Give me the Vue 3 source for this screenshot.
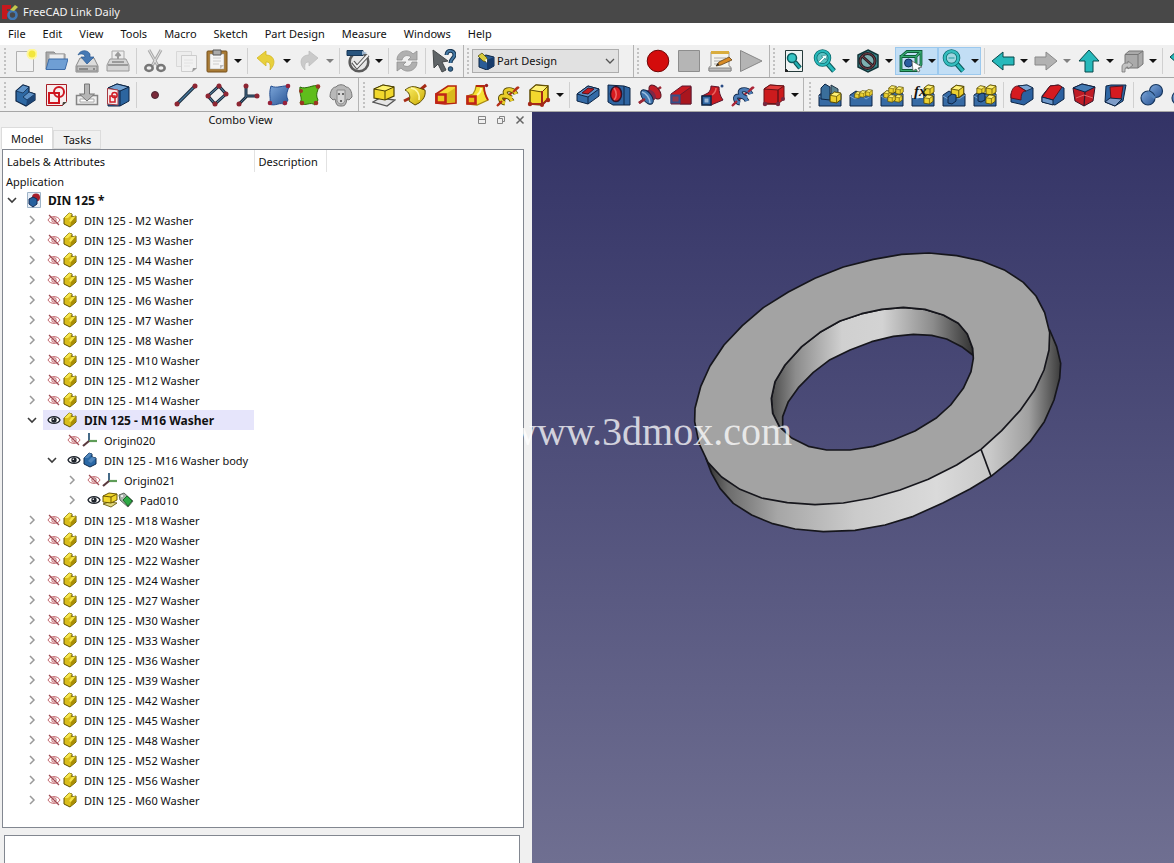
<script setup>
import { ref } from 'vue'

const menus = ['File', 'Edit', 'View', 'Tools', 'Macro', 'Sketch', 'Part Design', 'Measure', 'Windows', 'Help']

const b = (icon, label, opts = {}) => ({ kind: 'button', icon, label, ...opts })
const sep = { kind: 'separator' }
const menu = { menu: true }

const topRow = [
  {
    name: 'File',
    items: [
      b('new', 'New'), b('open', 'Open'), b('save', 'Save'), b('print', 'Print'), sep,
      b('cut', 'Cut'), b('copy', 'Copy'), b('paste', 'Paste', menu), sep,
      b('undo', 'Undo', menu), b('redo', 'Redo', { menu: true, off: true }), sep,
      b('check', 'Validate', menu), sep, b('refresh', 'Refresh'), sep, b('help', "What's This?"),
    ],
  },
  { name: 'Workbench', items: [{ kind: 'select' }] },
  { name: 'Macro', items: [b('record', 'Record macro'), b('stop', 'Stop macro'), b('macros', 'Macros'), b('play', 'Execute macro')] },
  {
    name: 'View',
    items: [
      b('fit', 'Fit all'), b('fitsel', 'Fit selection', menu), b('style', 'Draw style', menu),
      b('boxsel', 'Box selection', { menu: true, on: true }), b('zoom', 'Zoom', { menu: true, on: true }), sep,
      b('left', 'Back', menu), b('right', 'Forward', { menu: true, off: true }), b('up', 'Up', menu),
      b('link', 'Link', menu), sep, b('sync', 'Sync view'),
    ],
  },
]

const bottomRow = [
  {
    name: 'Part Design Helper',
    items: [
      b('body', 'Create body'), b('sketch', 'Create sketch'), b('import', 'Attach sketch'), b('map', 'Map sketch'), sep,
      b('point', 'Datum point'), b('line', 'Datum line'), b('plane', 'Datum plane'), b('axes', 'Coordinate system'),
      b('shapeblue', 'Shape binder'), b('shapegreen', 'Sub-shape binder'), b('clone', 'Clone'),
    ],
  },
  {
    name: 'Part Design Modeling',
    items: [
      b('pad', 'Pad'), b('revolve', 'Revolution'), b('loft', 'Additive loft'), b('pipe', 'Additive pipe'),
      b('helix', 'Additive helix'), b('prim', 'Additive primitive', menu), sep,
      b('pocket', 'Pocket'), b('hole', 'Hole'), b('groove', 'Groove'), b('subloft', 'Subtractive loft'),
      b('subpipe', 'Subtractive pipe'), b('subhelix', 'Subtractive helix'), b('subprim', 'Subtractive primitive', menu),
    ],
  },
  {
    name: 'Part Design Patterns',
    wide: true,
    items: [
      b('mirror', 'Mirrored'), b('linear', 'Linear pattern'), b('polar', 'Polar pattern'), b('fx', 'Configuration'),
      b('scaled', 'Scaled'), b('multi', 'MultiTransform'), sep,
      b('fillet', 'Fillet'), b('chamfer', 'Chamfer'), b('draft', 'Draft'), b('thick', 'Thickness'), sep,
      b('bool', 'Boolean'), b('bool', 'Boolean fragments'),
    ],
  },
]

const washer = (size) => ({ level: 1, label: `DIN 125 - M${size} Washer`, icons: ['t-part'], eye: 'off', open: false })

const rows = [
  { level: 0, label: 'DIN 125 *', icons: ['t-doc'], open: true, bold: true },
  ...[2, 3, 4, 5, 6, 7, 8, 10, 12, 14].map(washer),
  { level: 1, label: 'DIN 125 - M16 Washer', icons: ['t-part'], eye: 'on', open: true, bold: true, selected: true },
  { level: 2, label: 'Origin020', icons: ['t-origin'], eye: 'off' },
  { level: 2, label: 'DIN 125 - M16 Washer body', icons: ['t-body'], eye: 'on', open: true },
  { level: 3, label: 'Origin021', icons: ['t-origin'], eye: 'off', open: false },
  { level: 3, label: 'Pad010', icons: ['t-pad', 't-tag'], eye: 'on', open: false },
  ...[18, 20, 22, 24, 27, 30, 33, 36, 39, 42, 45, 48, 52, 56, 60].map(washer),
]

const workbench = ref('Part Design')
const tab = ref('Model')
</script>

<template>
  <div class="window">
    <svg class="sprite" aria-hidden="true">
      <defs>
        <linearGradient id="gYel" x2="1" y2="1"><stop stop-color="#fff36b" /><stop offset="1" stop-color="#c9a800" /></linearGradient>
        <linearGradient id="gBlue" x2="1" y2="1"><stop stop-color="#7da7da" /><stop offset="1" stop-color="#2a5595" /></linearGradient>

        <symbol id="new" viewBox="0 0 24 24"><path d="M3.500 2.500h17v20h-17z" fill="#f2f2f2" stroke="#b0b0b0" /><circle cx="19" cy="5" r="5.500" fill="#fff799" /><circle cx="19" cy="5" r="3.500" fill="#f2e63c" /></symbol>
        <symbol id="open" viewBox="0 0 24 24"><path d="M2 20V3h8l2 2h9v15z" fill="#a9a9a9" stroke="#8a8a8a" /><path d="M5 5h15v9H5z" fill="#eee" stroke="#aaa" /><path d="M2 20.500 5 10h19l-3 10.500z" fill="#6f9fd4" stroke="#3d6ca8" /></symbol>
        <symbol id="save" viewBox="0 0 24 24"><path d="M5 9h14l4 8v6H1v-6z" fill="#dcdcdc" stroke="#888" /><path d="M2 17h20v5H2z" fill="#c1c1c1" stroke="#888" /><path d="M4 20h9M18 20h2" stroke="#777" stroke-width="1.500" /><path d="M3 6c2-5 9-6 12-1v3h4l-7 7-6-7h4c0-3-4-4-7-2z" fill="#4679b4" stroke="#2b5a92" stroke-width=".7" /></symbol>
        <symbol id="print" viewBox="0 0 24 24"><path d="M6 2h12v10H6z" fill="#ededed" stroke="#aaa" /><path d="M12 5v5M9.500 7 12 4l2.500 3" fill="none" stroke="#999" stroke-width="2" /><path d="M4 10h16l3 6v6H1v-6z" fill="#d5d5d5" stroke="#989898" /><path d="M2 16h20M6 13h12" stroke="#888" stroke-width="1.500" /></symbol>
        <symbol id="cut" viewBox="0 0 24 24"><path d="m6 1 9 16M18 1 9 17" stroke="#aaa" stroke-width="3" /><path d="m6 1 9 16M18 1 9 17" stroke="#e2e2e2" /><g fill="none" stroke="#777" stroke-width="2.500"><ellipse cx="6" cy="19" rx="3.700" ry="3" /><ellipse cx="18" cy="19" rx="3.700" ry="3" /></g></symbol>
        <symbol id="copy" viewBox="0 0 24 24"><path d="M2.500 2.500h15v15h-15z" fill="#ededed" stroke="#d8d8d8" /><path d="M7.500 6.500h15v13l-4 3h-11z" fill="#f1f1f1" stroke="#cdcdcd" /><path d="M10 11h9M10 14h9M10 17h6" stroke="#e2e2e2" /><path d="m18 23 1-4h4z" fill="#999" /></symbol>
        <symbol id="paste" viewBox="0 0 24 24"><rect x="2" y="2" width="20" height="21" rx="1" fill="#a97b35" stroke="#76511c" /><path d="M5 5h14v15H5z" fill="#f5f5f5" stroke="#999" stroke-width=".5" /><path d="M8 1h8v5H8z" fill="#aaa" stroke="#555" /><path d="M8 9h8M8 12h8M8 15h6" stroke="#ccc" /><path d="M15 20v-4h4z" fill="#bbb" /></symbol>
        <symbol id="undo" viewBox="0 0 24 24"><path d="m3 9 9-7v4c8 0 11 8 4 15 1-7-1-8-4-8v4z" fill="#e8d03c" stroke="#d3b622" stroke-width=".8" /></symbol>
        <symbol id="redo" viewBox="0 0 24 24"><path d="m21 9-9-7v4c-8 0-11 8-4 15-1-7 1-8 4-8v4z" fill="#cacaca" stroke="#bcbcbc" stroke-width=".8" /></symbol>
        <symbol id="check" viewBox="0 0 24 24"><circle cx="13" cy="13" r="9.300" fill="#e7e7e7" stroke="#5b5b5b" stroke-width="2.600" /><path d="M1 1.500h16v5H1z" fill="#28547e" stroke="#173656" /><path d="m16 2 5 2-5 2" fill="#9fb8d0" /><path d="m7 13 4 5L22 6" fill="none" stroke="#555" stroke-width="4" /><path d="m7 13 4 5L22 6" fill="none" stroke="#f2f2f2" stroke-width="2" /></symbol>
        <symbol id="refresh" viewBox="0 0 24 24"><path d="M2 11c0-9 11-12 16-6l4-3v9h-9l3-3c-4-3-8-1-9 3zM22 13c0 9-11 12-16 6l-4 3v-9h9l-3 3c4 3 8 1 9-3z" fill="#b0b0b0" stroke="#919191" stroke-width=".8" /></symbol>
        <symbol id="help" viewBox="0 0 24 24"><path d="m1 1 15 11-6 1 4 8-4 2-4-8-4 4z" fill="#5f6467" stroke="#44484a" /><path d="M14.500 6c0-6 8-5 8 0 0 3-4 3.500-4 8" fill="none" stroke="#173550" stroke-width="4" /><path d="M14.500 6c0-6 8-5 8 0 0 3-4 3.500-4 8" fill="none" stroke="#4579a5" stroke-width="2" /><circle cx="18.500" cy="20" r="2.300" fill="#3a6a92" stroke="#173550" /></symbol>
        <symbol id="record" viewBox="0 0 24 24"><circle cx="12" cy="12" r="10.800" fill="#d40c0c" stroke="#6f0808" /></symbol>
        <symbol id="stop" viewBox="0 0 24 24"><path d="M1.500 1.500h21v21h-21z" fill="#b5b5b5" stroke="#8d8d8d" /></symbol>
        <symbol id="macros" viewBox="0 0 24 24"><path d="M3 3h18v14l2 1v4H1v-4l2-1z" fill="#f3f3ee" stroke="#999" /><path d="M1 19h22v3H1z" fill="#bbb" stroke="#888" /><path d="M3 2h18v3H3z" fill="#d9ad3e" /><path d="M6 9h12M6 12h10M6 15h7" stroke="#aaa" /><path d="m8 17 3-4 10-5 3 3-11 5z" fill="#d88b25" stroke="#61431b" stroke-width=".8" /><path d="m8 17 2-3 1 2z" fill="#222" /></symbol>
        <symbol id="play" viewBox="0 0 24 24"><path d="M1.500 1.500v21L23 12z" fill="#b4b4b4" stroke="#888" /></symbol>
        <symbol id="fit" viewBox="0 0 24 24"><path d="M3.500 1.500h17v21h-14l-3-3z" fill="#eff2f2" stroke="#263a3a" /><path d="m13 13 5 6" stroke="#0b4e50" stroke-width="4.500" /><path d="m13 13 5 6" stroke="#1fadb0" stroke-width="2.500" /><circle cx="10" cy="9" r="4.500" fill="#35c4c4" stroke="#0b5d60" stroke-width="1.500" /><path d="m3 19 4 4H3z" fill="#222" /></symbol>
        <symbol id="fitsel" viewBox="0 0 24 24"><path d="m14 14 7 8" stroke="#08585a" stroke-width="5" /><path d="m14 14 7 8" stroke="#27b9bb" stroke-width="3" /><circle cx="9.500" cy="9" r="7" fill="#5cc2c3" stroke="#08696b" stroke-width="3.500" /><circle cx="9.500" cy="9" r="7" fill="none" stroke="#27b9bb" stroke-width="2" /><path d="m5 13 5-5-2-1 6-1-1 5-1-2-5 5z" fill="#f3ffff" stroke="#147476" stroke-width=".5" /></symbol>
        <symbol id="style" viewBox="0 0 24 24"><path d="m12 1 10 5v12l-10 5L2 18V6z" fill="#39868b" stroke="#123539" stroke-width="1.500" /><circle cx="11.500" cy="12" r="7.500" fill="#7db0b1" stroke="#241f26" stroke-width="3" /><path d="m6 7 11 10" stroke="#241f26" stroke-width="3" /><circle cx="11.500" cy="12" r="7.500" fill="none" stroke="#7a4046" stroke-width="1" /><path d="m6 7 11 10" stroke="#7a4046" /></symbol>
        <symbol id="boxsel" viewBox="0 0 24 24"><circle cx="9.500" cy="14" r="4" fill="#2a5da0" stroke="#102d58" /><g fill="none" stroke="#0f5a38" stroke-width="2.800"><path d="M2 7.500h15v14H2zM2 7.500l6-5h14v13l-5 6M17 7.500l5-5" /></g><path d="M2 7.500h15v14H2zM2 7.500l6-5h14v13l-5 6M17 7.500l5-5" fill="none" stroke="#36ac70" stroke-width="1.200" /><path d="m13 12 10 6-4 1 2 3-2 1-2-3-3 2z" fill="#fff" stroke="#555" stroke-width=".7" /></symbol>
        <symbol id="zoom" viewBox="0 0 24 24"><path d="m14 14 7 8" stroke="#08585a" stroke-width="5" /><path d="m14 14 7 8" stroke="#27b9bb" stroke-width="3" /><circle cx="9.500" cy="9" r="6.800" fill="#9fd6e0" stroke="#08696b" stroke-width="4" /><circle cx="9.500" cy="9" r="6.800" fill="none" stroke="#35bdbf" stroke-width="2.500" /><path d="M6.500 9h6" stroke="#5fb7bf" stroke-width="2" /></symbol>
        <symbol id="left" viewBox="0 0 24 24"><path d="m1 12 11-9v5h11v8H12v5z" fill="#27b9bb" stroke="#07494b" /></symbol>
        <symbol id="right" viewBox="0 0 24 24"><path d="M23 12 12 3v5H1v8h11v5z" fill="#b2b2b2" stroke="#898989" /></symbol>
        <symbol id="up" viewBox="0 0 24 24"><path d="m12 1 10 11h-6v11H8V12H2z" fill="#27b9bb" stroke="#07494b" /></symbol>
        <symbol id="link" viewBox="0 0 24 24"><path d="M5 5.500 9 2h14v13l-5 4H5z" fill="#aaa" stroke="#777" /><path d="M5 5.500h13L23 2M18 5.500V19" fill="none" stroke="#777" /><path d="M2 23v-5c0-3 2-4 6-4v-2l5 4-5 4v-2c-2 0-3 1-3 3v2z" fill="#c2c2c2" stroke="#777" stroke-width=".8" /></symbol>
        <symbol id="sync" viewBox="0 0 24 24"><path d="m1 8 7-6v4h12v12h-4v-8H8v4z" fill="#27b9bb" stroke="#07494b" /></symbol>

        <symbol id="body" viewBox="0 0 24 24"><path d="m3 8 7-6 6 2v5l6 2v6l-9 6-10-5z" fill="#2e69a4" stroke="#0c2444" stroke-width="1.200" /><path d="m3 8 7-6 6 2-6 6zM10 14l6-5 6 2-8 6z" fill="#5f93c8" stroke="#0c2444" stroke-width=".7" /><path d="m14 17 8-6v6l-9 6z" fill="#1d4677" /></symbol>
        <symbol id="sketch" viewBox="0 0 24 24"><path d="M2.500 1.500h20v17l-4 4h-16z" fill="#f6eeee" stroke="#a71d25" /><path d="M5 10h10v10H5z" fill="none" stroke="#cf1620" stroke-width="2" /><circle cx="15" cy="9" r="5" fill="none" stroke="#cf1620" stroke-width="2" /><path d="m18 23 1-4h4z" fill="#4b463c" /></symbol>
        <symbol id="import" viewBox="0 0 24 24"><path d="M1.500 12.500h21v9h-21z" fill="#eee" stroke="#858585" stroke-width="1.500" /><path d="M5 16h14v3H5z" fill="#fff" stroke="#aaa" /><path d="M9.500 1h5v10h5L12 18l-7.500-7h5z" fill="#b5b5b5" stroke="#777" /></symbol>
        <symbol id="map" viewBox="0 0 24 24"><path d="m2 5 9-4 12 3v14l-9 5H2z" fill="#2c659f" stroke="#0c2444" /><path d="m2 5 9-4 12 3-9 4z" fill="#75a3d2" stroke="#0c2444" /><path d="M14 8v15" stroke="#0c2444" /><path d="M1.500 5.500 12 7v15l-10.500-1z" fill="#f4eeee" stroke="#a73b43" /><path d="M4 13h5v6H4z" fill="none" stroke="#d01d26" stroke-width="1.500" /><circle cx="8.500" cy="12" r="2.600" fill="none" stroke="#d01d26" stroke-width="1.500" /></symbol>
        <symbol id="point" viewBox="0 0 24 24"><circle cx="12" cy="12" r="3.500" fill="#7a2a39" stroke="#4a2834" /></symbol>
        <symbol id="line" viewBox="0 0 24 24"><path d="M3 21 21 3" stroke="#182a3c" stroke-width="3.200" /><path d="M3 21 21 3" stroke="#477a9e" stroke-width="1.300" /><circle cx="3" cy="21" r="2.500" fill="#8e2633" /><circle cx="21" cy="3" r="2.500" fill="#8e2633" /></symbol>
        <symbol id="plane" viewBox="0 0 24 24"><path d="M14 3 21 11 10 21 3 13z" fill="none" stroke="#182a3c" stroke-width="3" /><path d="M14 3 21 11 10 21 3 13z" fill="none" stroke="#6c9abb" /><g fill="#8e2633"><circle cx="14" cy="3" r="2.500" /><circle cx="21" cy="11" r="2.500" /><circle cx="10" cy="21" r="2.500" /><circle cx="3" cy="13" r="2.500" /></g></symbol>
        <symbol id="axes" viewBox="0 0 24 24"><path d="M10 3v11l-7 7M10 13h11" fill="none" stroke="#182a3c" stroke-width="3" /><path d="M10 3v11l-7 7M10 13h11" fill="none" stroke="#476c8a" /><g fill="#8e2633"><circle cx="10" cy="3" r="2.500" /><circle cx="3" cy="21" r="2.500" /><circle cx="21" cy="13" r="2.500" /></g></symbol>
        <symbol id="shapeblue" viewBox="0 0 24 24"><path d="M4 3c6 3 12-1 18 0-1 5-4 8-1 14l-3 5c-5-4-9 2-16-1 3-5-1-8 2-18z" fill="url(#gBlue)" stroke="#254f91" /><g fill="#97223b"><circle cx="21" cy="3" r="2.300" /><circle cx="3" cy="20" r="2.300" /><circle cx="18" cy="20" r="2.300" /></g></symbol>
        <symbol id="shapegreen" viewBox="0 0 24 24"><path d="M2 4c6 3 13-3 19-1-1 5-4 8-1 14l-3 5c-5-4-9 2-15-2 3-5-1-8 0-16z" fill="#5fbd1c" stroke="#2c6808" /><g fill="#9c3524"><circle cx="20" cy="3.500" r="2.300" /><circle cx="3" cy="8" r="2" /><circle cx="4" cy="20" r="2.300" /><circle cx="18" cy="20" r="2.300" /></g></symbol>
        <symbol id="clone" viewBox="0 0 24 24"><path d="M7 4c2-3 8-3 10 0 4 0 6 5 6 10l-3 3-2-1-1 4c-1 3-3 3-5 3s-4 0-5-3l-1-4-2 1-3-3C1 9 3 4 7 4z" fill="#b8b8b8" stroke="#777" /><path d="M8 7h8v11c-2 4-6 4-8 0z" fill="#d6d6d6" stroke="#8c8c8c" /><path d="M9 11h2M13 11h2M11 18h2" stroke="#444" stroke-width="1.500" /></symbol>

        <symbol id="pad" viewBox="0 0 24 24"><path d="m1 19 7-4 15 2-8 6z" fill="#e5e5e5" stroke="#555" stroke-width="1.300" /><path d="m2 6 9-4 11 2v9l-9 4-11-2z" fill="#f1d82d" stroke="#4c4000" stroke-width="1.200" /><path d="m2 6 9-4 11 2-9 4z" fill="#fff36d" stroke="#4c4000" /><path d="M13 8v9" stroke="#4c4000" /></symbol>
        <symbol id="revolve" viewBox="0 0 24 24"><path d="m1 18 6-3M17 7l6-5" stroke="#a62b16" stroke-width="3" /><path d="M2 7c4-3 7-4 11-3l9 3c1 6-2 10-6 13l-4 2-6-4c2-5 0-9-4-11z" fill="url(#gYel)" stroke="#5b4a00" /><path d="M8 5c6 1 9 6 8 12" fill="none" stroke="#fff9a5" stroke-width="1.500" /></symbol>
        <symbol id="loft" viewBox="0 0 24 24"><path d="m2 11 12-8h8v17l-11 1-9-1z" fill="#f6dc32" stroke="#b5250f" stroke-width="1.600" /><path d="m12 11 9-6v14l-9 1z" fill="#d9b91c" /><path d="M2.500 11.500h9v8h-9z" fill="#ecc822" stroke="#c02318" stroke-width="2.600" /></symbol>
        <symbol id="pipe" viewBox="0 0 24 24"><path d="m2 13 6-2c2-3 3-5 3-8l8 1c0 5 1 9 4 13l-11 5-10-1z" fill="#f6e034" stroke="#a98a12" stroke-width="1.300" /><path d="M11 3h8c0 5 1 9 4 14" fill="none" stroke="#b5250f" stroke-width="1.800" /><path d="M12 12c3-2 4-4 4-7" fill="none" stroke="#fff9a5" stroke-width="2" /><path d="M2.500 13.500h8v7h-8z" fill="#eabc1c" stroke="#c02318" stroke-width="2.600" /><circle cx="21.500" cy="2.500" r="1.700" fill="#922" /></symbol>
        <symbol id="helix" viewBox="0 0 24 24"><path d="M2 22 22 4" stroke="#b5301b" stroke-width="2.200" /><g fill="none" stroke="#5a4b00" stroke-width="5"><path d="M9 20c-5-1-6-7-2-7s8 2 9 5M16 15c-6-1-9-7-5-8s8 1 9 4" /></g><g fill="none" stroke="#e9cd29" stroke-width="3.200"><path d="M9 20c-5-1-6-7-2-7s8 2 9 5M16 15c-6-1-9-7-5-8s8 1 9 4" /></g><path d="m17 9 6-5M1 23l5-5" stroke="#b5301b" stroke-width="2.200" /></symbol>
        <symbol id="prim" viewBox="0 0 24 24"><path d="m3 7 6-5 12 1v13l-6 6-12-1z" fill="#f2d72e" stroke="#5f4b00" stroke-width="1.500" /><path d="m3 7 6-5 12 1-6 6z" fill="#fff178" stroke="#5f4b00" /><path d="M3 21h12V8M15 22l6-6" fill="none" stroke="#a42819" stroke-width="2" /><g fill="#a42819"><circle cx="3" cy="21" r="2.200" /><circle cx="15" cy="22" r="2" /><circle cx="21" cy="17" r="2.200" /></g></symbol>
        <symbol id="pocket" viewBox="0 0 24 24"><path d="m1 11 11-8 11 3v7L12 21 1 18z" fill="#346ba7" stroke="#0c2444" /><path d="m1 11 11-8 11 3-11 8z" fill="#5f92c8" stroke="#0c2444" /><path d="m6 10 6-5 6 1-6 5z" fill="#c11b20" stroke="#51111d" /><path d="M12 14v7" stroke="#0c2444" /></symbol>
        <symbol id="hole" viewBox="0 0 24 24"><path d="m1 2 16 1 6 2v17H6l-5-3z" fill="#2e64a1" stroke="#0c2444" /><path d="M17 3v19" stroke="#0c2444" /><ellipse cx="9" cy="11" rx="5.500" ry="7.500" fill="#d81b1f" stroke="#361226" stroke-width="1.500" /><path d="M7 5c3 4 3 9 0 12" fill="none" stroke="#ee6b68" stroke-width="1.500" /></symbol>
        <symbol id="groove" viewBox="0 0 24 24"><path d="M1 20 23 4" stroke="#9c2835" stroke-width="2.500" /><ellipse cx="17" cy="9" rx="4.500" ry="8" transform="rotate(-38 17 9)" fill="#c21d27" stroke="#581524" /><ellipse cx="13" cy="12" rx="4" ry="6" transform="rotate(-38 13 12)" fill="#7e2848" /><ellipse cx="9" cy="14" rx="4.500" ry="8.500" transform="rotate(-38 9 14)" fill="#3f74ae" stroke="#0c2444" /><path d="M4 9c4 1 8 6 8 11" fill="none" stroke="#9bbde0" stroke-width="1.500" /><path d="m1 20 6-4" stroke="#9c2835" stroke-width="2.500" /></symbol>
        <symbol id="subloft" viewBox="0 0 24 24"><path d="m2 11 11-8h9v18H2z" fill="#c71a21" stroke="#5d172e" /><path d="m11 12 11-8v17H11z" fill="#a9161e" stroke="#5d172e" stroke-width=".8" /><path d="M2.500 12.500h8v7h-8z" fill="#8f3a4e" stroke="#344f89" stroke-width="2" /></symbol>
        <symbol id="subpipe" viewBox="0 0 24 24"><path d="m2 13 6-3c2-2 3-4 3-7l8 1c0 5 1 9 4 13l-12 5-9-1z" fill="#c71a21" stroke="#5d172e" /><path d="M12 12c3-2 4-4 4-7" fill="none" stroke="#e96560" stroke-width="1.500" /><path d="M2 13h9v9H2z" fill="#2e64a1" stroke="#0c2444" stroke-width="1.500" /><path d="M4.500 15.500h4v4h-4z" fill="#98b5d5" /><circle cx="22" cy="3" r="1.500" fill="#294b84" /></symbol>
        <symbol id="subhelix" viewBox="0 0 24 24"><path d="M2 22 22 4" stroke="#ab2739" stroke-width="2.200" /><g fill="none" stroke="#12294b" stroke-width="5"><path d="M9 20c-5-1-6-7-2-7s8 2 9 5M16 15c-6-1-9-7-5-8s8 1 9 4" /></g><g fill="none" stroke="#4c7db7" stroke-width="3.200"><path d="M9 20c-5-1-6-7-2-7s8 2 9 5M16 15c-6-1-9-7-5-8s8 1 9 4" /></g><path d="m17 9 6-5M1 23l5-5" stroke="#ab2739" stroke-width="2.200" /></symbol>
        <symbol id="subprim" viewBox="0 0 24 24"><path d="m2 6 6-4 14 1v13l-6 5-14-1z" fill="#cc1b1d" stroke="#671318" /><path d="m2 6 6-4 14 1-6 4z" fill="#e03a38" stroke="#671318" /><path d="M2 21h14V7" fill="none" stroke="#671318" stroke-width="1.500" /><g fill="#762941"><circle cx="3" cy="21" r="2.200" /><circle cx="16" cy="21" r="2.200" /><circle cx="21" cy="16" r="2" /></g></symbol>

        <symbol id="cube-y" viewBox="0 0 12 12"><path d="m1 4 4-3 6 1v6l-4 3-6-1z" fill="#ecd030" stroke="#544700" stroke-width=".9" /><path d="m1 4 4-3 6 1-4 3z" fill="#fff277" stroke="#544700" stroke-width=".7" /><path d="M7 5v6" stroke="#544700" stroke-width=".7" /></symbol>
        <symbol id="slab" viewBox="0 0 24 24"><path d="m1 12 6-4 5 3 5-3 6 3v12H1z" fill="#376ba5" stroke="#0c2444" /><path d="m1 13 5 3 6-4 5 4 6-4" fill="none" stroke="#7ba4d0" /></symbol>
        <symbol id="mirror" viewBox="0 0 24 24"><use href="#slab" /><path d="m3 5 4-4 5 3v13l-9-1z" fill="#3a6f9c" stroke="#0c2444" /><path d="m13 2 7 4v9h-7z" fill="#5a8291" stroke="#234" /><use href="#cube-y" x="11" y="8" width="13" height="13" /></symbol>
        <symbol id="linear" viewBox="0 0 24 24"><use href="#slab" /><use href="#cube-y" x="5" y="8" width="8" height="8" /><use href="#cube-y" x="10" y="7" width="8" height="8" /><use href="#cube-y" x="16" y="6" width="8" height="8" /></symbol>
        <symbol id="polar" viewBox="0 0 24 24"><use href="#slab" /><use href="#cube-y" x="3" y="7" width="9" height="9" /><use href="#cube-y" x="8" y="2" width="9" height="9" /><use href="#cube-y" x="15" y="3" width="9" height="9" /><use href="#cube-y" x="14" y="11" width="9" height="9" /><use href="#cube-y" x="7" y="11" width="9" height="9" /></symbol>
        <symbol id="fx" viewBox="0 0 24 24"><use href="#slab" /><use href="#cube-y" x="12" y="1" width="12" height="12" /><use href="#cube-y" x="12" y="11" width="11" height="11" /><path d="M1 2h11v13H1z" fill="#f0f0f0" /><text x="3" y="13" font-family="Liberation Serif, serif" font-size="15" font-style="italic" font-weight="bold" fill="#111">fx</text></symbol>
        <symbol id="scaled" viewBox="0 0 24 24"><use href="#slab" /><use href="#cube-y" x="8" y="1" width="15" height="15" /><path d="m6 14 4-3 4 1v6l-4 3-4-1z" fill="#2f5f98" stroke="#0c2444" /></symbol>
        <symbol id="multi" viewBox="0 0 24 24"><use href="#slab" /><use href="#cube-y" x="3" y="2" width="10" height="10" /><use href="#cube-y" x="12" y="1" width="12" height="12" /><use href="#cube-y" x="12" y="11" width="11" height="11" /><path d="m5 12 4-2 3 1v6l-4 2-3-1z" fill="#2f5f98" stroke="#0c2444" /></symbol>
        <symbol id="fillet" viewBox="0 0 24 24"><path d="m1 11 7-8 9-1 6 3v11l-9 6-13-3z" fill="#2c61a0" stroke="#0c2444" /><path d="m8 3 9-1 6 3-7 3z" fill="#7ba5d3" stroke="#0c2444" stroke-width=".8" /><path d="M1 15v-4c1-5 3-8 7-8l8 5c-4 0-5 4-5 9z" fill="#d51b20" stroke="#5a1520" /></symbol>
        <symbol id="chamfer" viewBox="0 0 24 24"><path d="m1 13 8-10 8-1 6 3v11l-9 6-13-3z" fill="#2c61a0" stroke="#0c2444" /><path d="m1 14 8-11 9-1 3 2-9 13z" fill="#d51b20" stroke="#5a1520" /><path d="m1 14 11 3v5L1 19z" fill="#6b96c8" stroke="#0c2444" /></symbol>
        <symbol id="draft" viewBox="0 0 24 24"><path d="m1 5 9-4 13 3-2 14-9 5-9-5z" fill="#bf1b25" stroke="#35172c" /><path d="m1 5 9-4 13 3-10 5z" fill="#447ab3" stroke="#0c2444" /><path d="m13 9-1 14" stroke="#35172c" stroke-width="1.300" /><path d="m4 15 8-3 9 3" fill="none" stroke="#e4686a" /></symbol>
        <symbol id="thick" viewBox="0 0 24 24"><path d="m3 3 5-1h15l-3 16-8 5-10-4z" fill="#2f67a4" stroke="#0c2444" /><path d="m7 4 13-1-2 13H8z" fill="#d51b20" stroke="#5a1520" /><path d="m2 19 5-4 12 1-7 7z" fill="#7d9cc8" stroke="#0c2444" /></symbol>
        <symbol id="bool" viewBox="0 0 24 24"><circle cx="16" cy="8" r="6.500" fill="url(#gBlue)" stroke="#17375f" stroke-width="1.200" /><circle cx="8" cy="15" r="7" fill="url(#gBlue)" stroke="#17375f" stroke-width="1.200" /><path d="m9 8 7 6-2 2-8-6z" fill="#5484bc" /></symbol>

        <symbol id="t-part" viewBox="0 0 16 16"><path d="m2 6 5-5 3 1v3l4-1v6l-6 5-6-3z" fill="#d9bd1a" stroke="#5d4f00" /><path d="m2 6 5-5 3 1-4 4zM7 9l3-4 4-1-5 6z" fill="#f6e64d" /><path d="m8 15 1-5 5-6v6z" fill="#a88d05" /></symbol>
        <symbol id="t-body" viewBox="0 0 16 16"><path d="m2 6 5-5 3 1v3l4 1v6l-6 3-6-3z" fill="#2a68a5" stroke="#0e2b4d" /><path d="m2 6 5-5 3 1-4 4zM6 9l4-4 4 1-5 5z" fill="#5287bc" /></symbol>
        <symbol id="t-doc" viewBox="0 0 16 16"><path d="M1.500.500h13v15h-13z" fill="#e7eef7" stroke="#9fb4c8" /><circle cx="10" cy="5.500" r="4" fill="#a71f2b" /><path d="m3 7 4-2 4 2v5l-4 3-4-3z" fill="#255f9d" stroke="#142c56" /></symbol>
        <symbol id="t-origin" viewBox="0 0 16 16"><path d="M7 1v8" stroke="#456a87" stroke-width="2" /><path d="M7 9h8" stroke="#5f9c57" stroke-width="2.200" /><path d="m7 9-6 5" stroke="#5a3a3e" stroke-width="2.200" /></symbol>
        <symbol id="t-pad" viewBox="0 0 16 16"><path d="m1 12 6-2 8 1-6 4z" fill="#e1d77b" stroke="#776b20" /><path d="m1 4 6-3 8 1v6l-6 3-8-1z" fill="#f0d62c" stroke="#6c5800" /><path d="m1 4 8 1 6-3M9 5v6" fill="none" stroke="#6c5800" /></symbol>
        <symbol id="t-tag" viewBox="0 0 16 16"><path d="m1 3 5-2 9 8-5 6-8-7z" fill="#a9b3aa" stroke="#5c665d" /><path d="m5 8 4-4 5 5-4 5z" fill="#2ea945" stroke="#186c28" /><circle cx="4" cy="4" r="1" fill="#fff" /></symbol>
        <symbol id="eye-on" viewBox="0 0 16 16"><path d="M2 8c2-4.500 10-4.500 12 0-2 4.500-10 4.500-12 0z" fill="#fff" stroke="#1e242c" stroke-width="1.300" /><circle cx="8" cy="8" r="2.700" fill="#1e242c" /><circle cx="7.300" cy="7.200" r=".8" fill="#fff" /></symbol>
        <symbol id="eye-off" viewBox="0 0 16 16"><path d="M2 8c2-4.500 10-4.500 12 0-2 4.500-10 4.500-12 0z" fill="#fff" stroke="#c4666c" /><circle cx="8" cy="8" r="2.200" fill="none" stroke="#c4666c" /><path d="m3 3 10 10" stroke="#9f4a52" stroke-width="1.300" /></symbol>
        <symbol id="chev-down" viewBox="0 0 16 16"><path d="m4 6 4 4 4-4" fill="none" stroke="#3c3c3c" stroke-width="1.600" /></symbol>
        <symbol id="chev-right" viewBox="0 0 16 16"><path d="m6 4 4 4-4 4" fill="none" stroke="#9a9a9a" stroke-width="1.500" /></symbol>
        <symbol id="logo" viewBox="0 0 16 16"><path d="M0 1h9v4H5v2h3v3H5v5H0z" fill="#c5191e" /><circle cx="10.500" cy="11" r="4" fill="none" stroke="#4278b3" stroke-width="2.600" /><path d="m8 6 5-5 3 2-4 4z" fill="#c4c84c" /></symbol>
        <symbol id="wb" viewBox="0 0 18 18"><path d="m2 6 7-3 8 2v9l-7 4-8-3z" fill="#2a5c97" stroke="#0e2645" /><path d="m10 8 7-3v9l-7 4z" fill="#173b6b" /><path d="m1 4 4-3 5 5v4l-4-1z" fill="#d8cb3c" stroke="#575214" stroke-width=".8" /><path d="m8 8 2-1v4z" fill="#fff" /></symbol>
      </defs>
    </svg>

    <header class="titlebar">
      <svg class="i16" aria-hidden="true"><use href="#logo" /></svg>
      <span>FreeCAD Link Daily</span>
    </header>

    <nav class="menubar" aria-label="Main menu">
      <button v-for="m in menus" :key="m" type="button">{{ m }}</button>
    </nav>

    <div v-for="(row, r) in [topRow, bottomRow]" :key="r" class="toolrow">
      <div v-for="bar in row" :key="bar.name" class="toolbar" :class="{ wide: bar.wide }" role="toolbar" :aria-label="bar.name">
        <span class="handle"></span>
        <template v-for="(item, i) in bar.items" :key="i">
          <span v-if="item.kind === 'separator'" class="sep"></span>
          <div v-else-if="item.kind === 'select'" class="workbench">
            <svg class="wb-icon" aria-hidden="true"><use href="#wb" /></svg>
            <select v-model="workbench" aria-label="Workbench">
              <option>Part Design</option>
            </select>
            <svg class="wb-arrow" viewBox="0 0 10 6" aria-hidden="true"><path d="m1 1 4 4 4-4" fill="none" stroke="#555" stroke-width="1.300" /></svg>
          </div>
          <button v-else type="button" class="tool" :class="{ menu: item.menu, on: item.on, off: item.off }" :aria-label="item.label">
            <svg class="i24" aria-hidden="true"><use :href="'#' + item.icon" /></svg>
            <span v-if="item.menu" class="drop"></span>
          </button>
        </template>
      </div>
    </div>

    <main class="workspace">
      <aside class="dock">
        <div class="dock-title">
          <h2>Combo View</h2>
          <div class="dock-buttons">
            <button type="button" aria-label="Collapse"><svg viewBox="0 0 10 10"><path d="M1.500 1.500h7v7h-7zM1 4.500h8" /></svg></button>
            <button type="button" aria-label="Float"><svg viewBox="0 0 10 10"><path d="M3.500 3.500v-2h5v5h-2M1.500 3.500h5v5h-5z" /></svg></button>
            <button type="button" aria-label="Close"><svg class="close" viewBox="0 0 10 10"><path d="m1.500 1.500 7 7M8.500 1.500l-7 7" /></svg></button>
          </div>
        </div>
        <div class="tabs" role="tablist">
          <button v-for="t in ['Model', 'Tasks']" :key="t" type="button" role="tab" :aria-selected="tab === t" :class="{ active: tab === t }" @click="tab = t">{{ t }}</button>
        </div>
        <div class="tree">
          <table role="treegrid" aria-label="Model tree">
            <colgroup><col class="c1" /><col class="c2" /><col /></colgroup>
            <thead>
              <tr><th scope="col">Labels &amp; Attributes</th><th scope="col">Description</th><td></td></tr>
            </thead>
            <tbody>
              <tr class="app"><td colspan="3">Application</td></tr>
              <tr v-for="row in rows" :key="row.label" :aria-level="row.level + 1" :aria-selected="!!row.selected">
                <td>
                  <div class="node" :class="['lv' + row.level, { bold: row.bold }]">
                    <button v-if="row.open !== undefined" type="button" class="i16" :aria-label="row.open ? 'Collapse' : 'Expand'">
                      <svg class="i16" aria-hidden="true"><use :href="row.open ? '#chev-down' : '#chev-right'" /></svg>
                    </button>
                    <span v-else class="i16"></span>
                    <div class="item" :class="{ selected: row.selected }">
                      <svg v-if="row.eye" class="i16" aria-hidden="true"><use :href="'#eye-' + row.eye" /></svg>
                      <svg v-for="ic in row.icons" :key="ic" class="i16" aria-hidden="true"><use :href="'#' + ic" /></svg>
                      <span class="label">{{ row.label }}</span>
                    </div>
                  </div>
                </td>
                <td></td>
                <td></td>
              </tr>
            </tbody>
          </table>
        </div>
        <div class="properties"></div>
      </aside>

      <section class="view3d" aria-label="3D view">
        <svg class="model" viewBox="0 0 1200 930" role="img" aria-label="M16 washer">
          <defs>
            <linearGradient id="rim" gradientUnits="userSpaceOnUse" x1="80" y1="0" x2="1142" y2="0">
              <stop stop-color="#2e2e2e" /><stop offset=".06" stop-color="#6c6c6c" /><stop offset=".2" stop-color="#a6a6a6" />
              <stop offset=".42" stop-color="#cbcbcb" /><stop offset=".65" stop-color="#dadada" /><stop offset=".8" stop-color="#c9c9c9" />
              <stop offset=".91" stop-color="#a0a0a0" /><stop offset="1" stop-color="#3c3c3c" />
            </linearGradient>
            <linearGradient id="bore" gradientUnits="userSpaceOnUse" x1="274" y1="0" x2="880" y2="0">
              <stop stop-color="#4c4c4c" /><stop offset=".12" stop-color="#8c8c8c" /><stop offset=".35" stop-color="#d0d0d0" />
              <stop offset=".55" stop-color="#d3d3d3" /><stop offset=".8" stop-color="#8c8c8c" /><stop offset="1" stop-color="#323232" />
            </linearGradient>
          </defs>
          <g stroke="#16161c" stroke-width="5" stroke-linejoin="round">
            <path fill="url(#rim)" d="M1109 285 1130 335 1142 385 1139 430 1122 495 1093 560 1050 620 1000 670 933 724 870 762 790 803 700 844 615 870 525 886 430 890 345 882 275 865 215 840 160 805 120 760 95 715 78 670 180 750 405 800 660 755 903 630 1063 460z" />
            <path fill="url(#bore)" d="M308 580 298 575 278 535 274 490 285 440 315 390 365 335 420 292 480 258 545 236 605 223 670 217 735 223 790 240 835 265 862 297 878 340 878 360 845 335 800 312 755 301 700 298 640 304 575 320 510 345 450 374 400 412 355 458 325 500 308 545z" />
            <path fill="#a3a3a3" fill-rule="evenodd" d="M747 54 830 62 905 78 975 106 1030 142 1068 183 1094 233 1109 293 1107 345 1092 405 1063 466 1020 527 965 587 903 643 830 690 745 733 660 765 575 789 490 804 405 809 322 803 245 789 180 763 125 726 84 682 57 625 44 560 45 520 62 455 90 393 132 330 187 272 250 218 325 171 405 130 490 96 580 73 665 58zM670 217 735 223 790 240 835 265 862 297 878 340 880 370 873 410 850 460 812 510 770 548 705 588 640 615 580 634 510 645 440 645 385 634 335 609 298 575 278 535 274 490 285 440 315 390 365 335 420 292 480 258 545 236 605 223z" />
            <path d="m903 643 30 81" />
          </g>
        </svg>
      </section>
      <span class="watermark">www.3dmox.com</span>
    </main>
  </div>
</template>

<style>
body {
  margin: 0;
}
</style>

<style scoped>
.window {
  display: flex;
  flex-direction: column;
  height: 100vh;
  overflow: hidden;
  background: #f0f0f0;
  color: #111;
  font: 11px/16px "Noto Sans", "Open Sans", sans-serif;
}
.sprite {
  position: absolute;
  width: 0;
  height: 0;
}
button,
select {
  margin: 0;
  padding: 0;
  border: 0;
  background: none;
  color: inherit;
  font: inherit;
}
svg {
  display: block;
  flex: none;
}
.i16 {
  width: 16px;
  height: 16px;
  flex: none;
}
.i24 {
  width: 24px;
  height: 24px;
}
.titlebar {
  display: flex;
  align-items: center;
  gap: 5px;
  height: 23px;
  flex: none;
  padding-left: 2px;
  background: #484848;
  color: #f4f4f4;
}
.menubar {
  display: flex;
  gap: 1px;
  height: 22px;
  flex: none;
  background: #fff;
}
.menubar button {
  padding: 0 8px;
}
.toolrow {
  display: flex;
  flex: none;
  height: 32px;
  overflow: hidden;
  border-bottom: 1px solid #a6a6a6;
}
.toolrow + .toolrow {
  height: 33px;
}
.toolbar {
  display: flex;
  align-items: center;
  flex: none;
  padding: 0 3px 0 2px;
  border-right: 1px solid #b4b4b4;
}
.toolbar:first-child {
  padding: 0 4px 0 3px;
}
.toolrow + .toolrow .toolbar {
  padding-right: 2px;
}
.toolrow + .toolrow .toolbar:nth-child(2) {
  padding-left: 3px;
}
.toolbar.wide {
  padding-left: 4px;
}
.toolbar:last-child {
  border-right: 0;
}
.handle {
  width: 2px;
  height: 26px;
  margin: 0 3px 0 1px;
  flex: none;
  background: repeating-linear-gradient(#c2c2c2 0 2px, transparent 2px 4px);
}
.sep {
  width: 1px;
  height: 26px;
  margin: 0 2px 0 3px;
  flex: none;
  background: #d0d0d0;
}
.tool {
  display: flex;
  align-items: center;
  width: 31px;
  height: 28px;
  padding-left: 4px;
  flex: none;
  box-sizing: border-box;
}
.tool.menu {
  width: 43px;
  gap: 5px;
}
.tool.on {
  padding-left: 3px;
  background: #c2def5;
  border: 1px solid #9cc9ee;
}
.drop {
  border: 4px solid transparent;
  border-top-color: #111;
  border-bottom: 0;
}
.off .drop {
  border-top-color: #808080;
}
.workbench {
  position: relative;
  width: 147px;
  height: 24px;
  margin: 0 11px 0 0;
}
.workbench select {
  width: 100%;
  height: 100%;
  padding: 0 24px;
  appearance: none;
  background: #e1e1e1;
  border: 1px solid #adadad;
  border-radius: 0;
}
.wb-icon {
  position: absolute;
  left: 5px;
  top: 3px;
  width: 18px;
  height: 18px;
}
.wb-arrow {
  position: absolute;
  right: 4px;
  top: 9px;
  width: 10px;
  height: 6px;
}
.workspace {
  position: relative;
  display: grid;
  grid-template-columns: 532px minmax(0, 1fr);
  flex: 1;
  min-height: 0;
}
.dock {
  display: flex;
  flex-direction: column;
  min-height: 0;
}
.dock-title {
  display: grid;
  grid-template-columns: 1fr auto 1fr;
  align-items: center;
  height: 15px;
  padding: 0 7px 0 0;
  margin-left: -44px;
}
.dock-title h2 {
  grid-column: 2;
  margin: 0;
  font-size: 11px;
  font-weight: 400;
}
.dock-buttons {
  display: flex;
  justify-content: flex-end;
  gap: 9px;
}
.dock-buttons svg {
  width: 10px;
  height: 10px;
  fill: none;
  stroke: #858585;
}
.dock-buttons .close {
  stroke: #666;
  stroke-width: 1.5;
}
.tabs {
  display: flex;
  align-items: flex-end;
  height: 22px;
  flex: none;
  padding-left: 1px;
}
.tabs button {
  box-sizing: border-box;
  height: 19px;
  padding: 0 9px;
  border: 1px solid #dcdcdc;
}
.tabs .active {
  height: 22px;
  background: #fff;
  border-bottom: 0;
}
.tree {
  flex: 1;
  min-height: 0;
  margin: 0 8px 0 2px;
  overflow: hidden;
  background: #fff;
  border: 1px solid #828790;
}
table {
  width: 100%;
  border-collapse: collapse;
  table-layout: fixed;
}
.c1 {
  width: 251px;
}
.c2 {
  width: 72px;
}
th,
td {
  box-sizing: border-box;
  padding: 0;
  height: 20px;
  font-weight: 400;
  text-align: left;
  white-space: nowrap;
}
th {
  height: 22px;
  padding: 2px 0 0 4px;
  border-right: 1px solid #e2e2e2;
}
.app td {
  height: 18px;
  padding: 2px 0 0 3px;
}
.node {
  display: flex;
  align-items: center;
  gap: 3px;
  height: 20px;
  padding-left: 1px;
}
.lv1 {
  padding-left: 21px;
}
.lv2 {
  padding-left: 41px;
}
.lv3 {
  padding-left: 61px;
}
.bold {
  font-size: 12px;
  font-weight: 700;
}
.item {
  display: flex;
  align-items: center;
  flex: 1;
  height: 20px;
  padding-left: 3px;
}
.selected {
  background: #e6e5fb;
}
.label {
  padding: 2px 0 0 6px;
}
.properties {
  height: 27px;
  flex: none;
  margin: 7px 12px 0 4px;
  background: #fff;
  border: 1px solid #828790;
  border-bottom: 0;
}
.view3d {
  position: relative;
  overflow: hidden;
  background: linear-gradient(#333366, #6f6f91);
}
.model {
  position: absolute;
  left: 148px;
  top: 123px;
  width: 400px;
  height: 310px;
}
.watermark {
  position: absolute;
  left: 508px;
  top: 298px;
  color: rgba(255, 255, 255, 0.75);
  font: 40px/44px "Liberation Serif", serif;
  pointer-events: none;
}
</style>
